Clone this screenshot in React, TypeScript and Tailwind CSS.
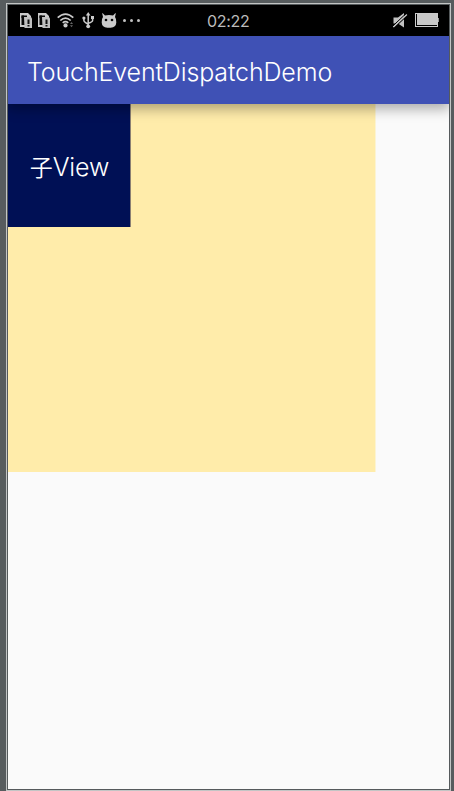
function SimIcon() {
  return (
    <svg className="block" width="13" height="16" viewBox="0 0 13 16">
      <path d="M0 0h8l3 3v1H4v8h1v2H0z" fill="#cbcbcb" />
      <path d="M1.500 2.500H4V12H1.500z" fill="#080808" />
      <path d="M1.500 2.500H7V4H4v1H1.500z" fill="#080808" />
      <path d="M4 4h7l1 1.500V15H4.500z" fill="#c0c0c0" />
      <path d="M7.500 6.500h2V11h-2zM7.500 12h2v1.500h-2z" fill="#111" />
    </svg>
  );
}

function WifiIcon() {
  return (
    <svg className="block" width="18" height="16" viewBox="0 0 18 16" fill="none" stroke="#cbcbcb" strokeWidth="1.700">
      <path d="M.7 4.700Q8.500-2.500 16.300 4.700M3.300 7.500Q8.500 2.600 13.700 7.500M5.700 9.800Q8.500 7.600 11.300 9.800" />
      <circle cx="8.500" cy="12.400" r="2.100" fill="#cbcbcb" stroke="none" />
      <path d="M13 11l1.500-2 1.500 2zM13 12.300l1.500 2 1.500-2z" fill="#666" stroke="none" />
    </svg>
  );
}

function UsbIcon() {
  return (
    <svg className="block" width="13" height="17" viewBox="0 0 13 17" fill="none" stroke="#cbcbcb" strokeWidth="1.500">
      <path d="M6.200 2v13M1.900 6v2.600q0 1.600 4.300 3.600M10.600 5v3.400q0 1.300-4.400 3" />
      <path d="M6.200 0l2.300 3.400H3.900z" fill="#cbcbcb" stroke="none" />
      <circle cx="1.900" cy="6" r="1.600" fill="#cbcbcb" stroke="none" />
      <path d="M9 4h3v3H9z" fill="#cbcbcb" stroke="none" />
      <circle cx="6.200" cy="14.300" r="1.900" fill="#cbcbcb" stroke="none" />
    </svg>
  );
}

function RobotIcon() {
  return (
    <svg className="block" width="16" height="16" viewBox="0 0 16 16">
      <path d="M1.500 0L4 2.500q4-.9 8 0L14.500 0l.3.4L14 4q1.600 2 1.300 5.500-.3 5-5.600 5.300H6.300Q1 14.500.7 9.500.4 6 2 4L1.200.4z" fill="#cbcbcb" />
      <circle cx="5" cy="7" r="1.300" fill="#080808" />
      <circle cx="11" cy="7" r="1.300" fill="#080808" />
    </svg>
  );
}

function MuteIcon() {
  return (
    <svg className="block" width="15" height="16" viewBox="0 0 15 16">
      <path d="M.5 4.500H5L11 0v14.500l-6-4H.5z" fill="#c2c2c2" />
      <path d="M.5 15L14.500 2" stroke="#000" strokeWidth="1.500" />
      <path d="M.3 14L13.800 1.500" stroke="#cbcbcb" strokeWidth="1.500" />
      <path d="M0 12.800L13 .6" stroke="#000" strokeWidth="1" />
    </svg>
  );
}

function BatteryIcon() {
  return (
    <svg className="block" width="24" height="14" viewBox="0 0 24 14" shapeRendering="crispEdges">
      <path d="M.5.5h22v13H.5z" fill="none" stroke="#cbcbcb" />
      <path d="M2 1h20v11H2z" fill="#c8c8c8" />
      <path d="M23 5h1v4h-1z" fill="#999" />
    </svg>
  );
}

function StatusBar() {
  return (
    <div className="flex h-[31px] items-start bg-black pl-3">
      <div className="mt-2"><SimIcon /></div>
      <div className="mt-2 ml-[5px]"><SimIcon /></div>
      <div className="mt-2 ml-[6px]"><WifiIcon /></div>
      <div className="mt-[7px] ml-[7px]"><UsbIcon /></div>
      <div className="mt-2 ml-[6px]"><RobotIcon /></div>
      <div className="mt-[14px] ml-[6px] flex gap-[4px]">
        <i className="size-[3px] rounded-full bg-[#c0c0c0]" />
        <i className="size-[3px] rounded-full bg-[#c0c0c0]" />
        <i className="size-[3px] rounded-full bg-[#c0c0c0]" />
      </div>
      <span className="mt-[5px] ml-[67px] w-[46px] text-[16px] leading-[22px] font-normal tracking-[-0.3px] whitespace-nowrap text-[#bcbcbc]">02:22</span>
      <div className="mt-2 ml-[140px]"><MuteIcon /></div>
      <div className="mt-2 ml-[7px]"><BatteryIcon /></div>
    </div>
  );
}

export default function App() {
  return (
    <div className="flex h-[791px] w-[454px] flex-col bg-[#575c5e] pt-[3px] pl-[6px] font-[Inter,'Noto_Sans_CJK_SC',sans-serif]">
      <div className="h-[788px] w-[445px] border border-[#c3c5c5]">
        <div className="flex h-[786px] w-[443px] flex-col border border-[#555a5c] bg-[#fafafa]">
          <StatusBar />
          <header className="z-10 flex h-[68px] shrink-0 items-center bg-[#3f51b5] pl-[19px] shadow-[0_4px_12px_1px_rgba(0,0,0,0.32)] [clip-path:inset(0_0_-20px_0)]">
            <h1 className="pt-[3px] text-[25px] leading-8 font-[350] tracking-[-0.13px] whitespace-nowrap text-white">TouchEventDispatchDemo</h1>
          </header>
          <main className="h-[368px] w-[368px] border-r border-[#fcf4d4] bg-[#ffecaa]">
            <div className="flex h-[123px] w-[123px] items-center justify-center border-r border-[#8b8074] bg-[#001055] pt-[4px] pl-px text-[25px] font-[350] tracking-[-0.15px] text-white">
              <span><span className="text-[23px]">子</span>View</span>
            </div>
          </main>
        </div>
      </div>
    </div>
  );
}
